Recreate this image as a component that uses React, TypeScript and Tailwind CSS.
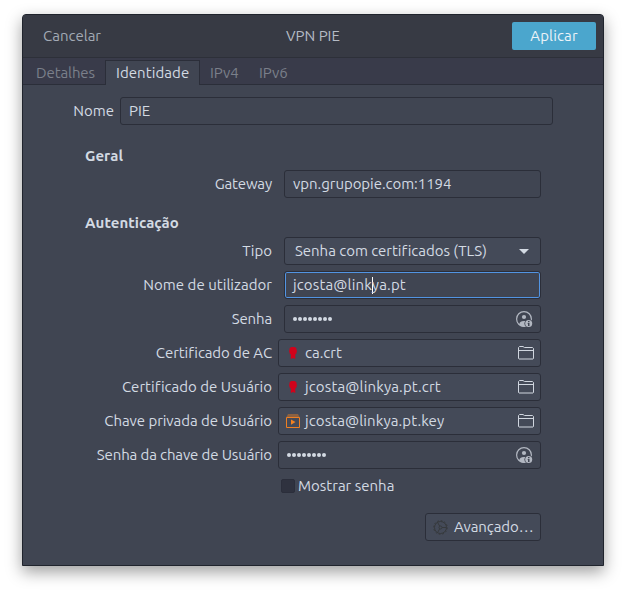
import type { ReactNode } from 'react';

function Row({ label, track = '', mt = 'mt-[6px]', file = false, children }: { label: string; track?: string; mt?: string; file?: boolean; children: ReactNode }) {
  return (
    <div className={`flex h-7 items-center ${mt}`}>
      <div className={`w-[249px] whitespace-nowrap text-right ${track}`}>{label}</div>
      <div className={file ? 'ml-[6px] w-[263px]' : 'ml-3 w-[257px]'}>{children}</div>
    </div>
  );
}

function Box({ className = '', children }: { className?: string; children?: ReactNode }) {
  return <div className={`flex h-7 items-center whitespace-nowrap rounded-[3px] border border-[#2b2e39] ${className}`}>{children}</div>;
}

function Dots() {
  return (
    <div className="flex">
      {Array.from({ length: 8 }, (_, i) => (
        <span key={i} className="mr-px size-1 rounded-full bg-[#d3dae3]" />
      ))}
    </div>
  );
}

function Seal() {
  return (
    <svg className="ml-[10px] mr-[8px] shrink-0" width="8" height="12" viewBox="0 0 8 12" fill="#d0021b">
      <path d="M2.500 0h3l1 .6 1 .9v1.500L8 4l-.5 1.500v1l-1 .6-.2.400V12L4 11 1.800 12V7.500l-.3-.4-1-.6v-1L0 4l.5-1V1.500l1-.9z" />
    </svg>
  );
}

function KeyFile() {
  return (
    <svg className="ml-[7px] mr-[5px] shrink-0" width="14" height="14" viewBox="0 0 14 14">
      <path d="M2 0h10l1.500 3H.5z" fill="#a46a3a" fillOpacity="0.75" />
      <path d="M.5 3.500h13v10H.5z" fill="none" stroke="#ee7f22" />
      <path d="M5 5.500v5.200L9.500 8.100z" fill="#f5821f" />
    </svg>
  );
}

function Folder() {
  return (
    <svg className="ml-auto mr-[6px]" width="16" height="14" viewBox="0 0 16 14" fill="none" stroke="#d0d6df">
      <path d="M.5 12.500V1.500L1.500.5H5l1.500 1h8l1 1v10l-.5.5H1z" />
      <path d="M.5 4.500h15" />
    </svg>
  );
}

function UserInfo() {
  return (
    <svg className="ml-auto mr-[7px]" width="17" height="17" viewBox="0 0 17 17">
      <circle cx="8" cy="8" r="7.400" fill="none" stroke="#b2b7c1" strokeWidth="1.200" />
      <circle cx="8" cy="6" r="2.100" fill="#b2b7c1" />
      <path d="M3.300 14c0-3 1.500-4 4.700-4 2 0 3 .3 3.500 1v4.200C8.500 16.200 5.500 16 3.300 14z" fill="#b2b7c1" />
      <circle cx="12.700" cy="12.500" r="4.300" fill="#404552" />
      <circle cx="12.700" cy="12.500" r="3.500" fill="#b2b7c1" />
      <path d="M12 10h1.500v1.200H12zM11.700 12h1.800v3H12v-2h-.3z" fill="#404552" />
    </svg>
  );
}

function Gear() {
  return (
    <svg className="ml-[7px] mr-[6px] shrink-0" width="15" height="15" viewBox="0 0 15 15" fill="none" stroke="#36393c">
      <circle cx="7.500" cy="7.500" r="6" />
      <circle cx="7.500" cy="7.500" r="6.800" strokeWidth="1" strokeDasharray="1.700 1.861" />
      <circle cx="7.500" cy="7.500" r="1.500" />
      <path d="M9 7.500h4.500M6.700 6.200L4.500 2.300M6.700 8.800l-2.200 3.900" />
    </svg>
  );
}

export default function App() {
  return (
    <div className="h-[596px] w-[626px] overflow-hidden bg-white pl-[22px] pt-[14px] font-['Ubuntu','Noto_Sans',sans-serif] text-[15px] leading-5 text-[#d3dae3]">
      <div className="flex h-[552px] w-[582px] flex-col overflow-hidden rounded-t-[4px] border border-[#20242d] bg-[#404552] shadow-[0_6px_16px_rgba(0,0,0,0.38)]">
        <header className="flex h-[43px] shrink-0 items-center border-b border-[#2d3039] bg-[#373a44] text-[#b5bbc5]">
          <div className="w-[263px] pl-5 text-[#a3aab5]">Cancelar</div>
          <div className="whitespace-nowrap">VPN PIE</div>
          <button className="ml-auto mr-[7px] h-7 w-[84px] rounded-[2px] bg-[#4ba6cd] tracking-[0.15px] text-[#edf3f8]">Aplicar</button>
        </header>
        <nav className="flex h-[27px] shrink-0 items-end border-b border-[#2b2e39] bg-[#393b4a] text-[#7b808b]">
          <div className="h-[21px] w-[82px] pl-[13px] tracking-[-0.1px]">Detalhes</div>
          <div className="-mb-px h-[25px] w-[95px] border border-b-0 border-[#2b2e39] bg-[#404552] pl-[10px] pt-[2px] tracking-[0.07px] text-[#d3dae3]">Identidade</div>
          <div className="h-[21px] w-[49px] pl-[10px]">IPv4</div>
          <div className="h-[21px] pl-[10px]">IPv6</div>
        </nav>
        <main className="pt-3">
          <div className="flex h-7 items-center">
            <div className="w-[91px] text-right">Nome</div>
            <Box className="ml-[6px] w-[433px] pl-2">PIE</Box>
          </div>
          <div className="mt-[21px] h-5 pl-[62px] font-bold tracking-[0.05px]">Geral</div>
          <Row label="Gateway" track="tracking-[-0.15px]" mt="mt-[4px]"><Box className="pl-2 tracking-[-0.04px]">vpn.grupopie.com:1194</Box></Row>
          <div className="mt-[15px] h-5 pl-[62px] font-bold tracking-[0.06px]">Autenticação</div>
          <Row label="Tipo" mt="mt-[4px]">
            <Box className="bg-[#444a58] pl-[10px]">
              <span className="tracking-[-0.03px]">Senha com certificados (TLS)</span>
              <svg className="ml-auto mr-[11px]" width="10" height="5" viewBox="0 0 10 5" fill="#d3dae3"><path d="M0 0h10L5 5z" /></svg>
            </Box>
          </Row>
          <Row label="Nome de utilizador" track="tracking-[0.03px]">
            <Box className="pl-2 tracking-[0.14px] ring-1 ring-inset ring-[#5294e2]"><span>jcosta@link</span><span className="-mr-px h-[17px] w-px bg-white" /><span>ya.pt</span></Box>
          </Row>
          <Row label="Senha" track="tracking-[-0.15px]"><Box className="pl-2"><Dots /><UserInfo /></Box></Row>
          <Row label="Certificado de AC" track="tracking-[-0.08px]" file><Box className="bg-[#444a58]"><Seal /><span>ca.crt</span><Folder /></Box></Row>
          <Row label="Certificado de Usuário" track="tracking-[0.01px]" file><Box className="bg-[#444a58]"><Seal /><span className="tracking-[0.14px]">jcosta@linkya.pt.crt</span><Folder /></Box></Row>
          <Row label="Chave privada de Usuário" track="tracking-[-0.06px]" file><Box className="bg-[#444a58]"><KeyFile /><span className="tracking-[0.1px]">jcosta@linkya.pt.key</span><Folder /></Box></Row>
          <Row label="Senha da chave de Usuário" track="tracking-[-0.12px]" file><Box className="pl-2"><Dots /><UserInfo /></Box></Row>
          <div className="ml-[258px] mt-[7px] flex h-5 items-center">
            <span className="mr-[3px] size-[14px] rounded-[2px] border border-[#2b2e3b] bg-[#2f323f]" />
            <span>Mostrar senha</span>
          </div>
          <Box className="ml-[402px] mt-[17px] w-[116px] bg-[#444a58]"><Gear /><span className="tracking-[-0.08px]">Avançado…</span></Box>
        </main>
      </div>
    </div>
  );
}
